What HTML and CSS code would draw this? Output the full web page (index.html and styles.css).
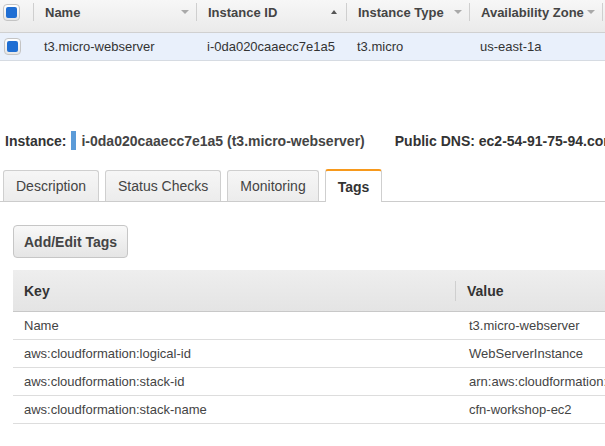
FILE: index.html
```
<!DOCTYPE html>
<html>
<head>
<meta charset="utf-8">
<link rel="stylesheet" href="styles.css">
</head>
<body>
<div class="page">
  <div class="grid grid-head">
    <div class="hcell hcell-check"><span class="check"><span class="check-fill"></span></span></div>
    <div class="hcell"><span>Name</span><span class="arrow-down"></span></div>
    <div class="hcell"><span>Instance ID</span><span class="arrow-up"></span></div>
    <div class="hcell"><span>Instance Type</span><span class="arrow-down"></span></div>
    <div class="hcell"><span>Availability Zone</span><span class="arrow-down"></span></div>
    <div class="hcell hcell-last"></div>
  </div>
  <div class="grid grid-row">
    <div class="dcell dcell-check"><span class="check"><span class="check-fill"></span></span></div>
    <div class="dcell">t3.micro-webserver</div>
    <div class="dcell">i-0da020caaecc7e1a5</div>
    <div class="dcell">t3.micro</div>
    <div class="dcell">us-east-1a</div>
    <div class="dcell"></div>
  </div>

  <div class="instance-line">
    <span class="inst-label">Instance:</span>
    <span class="inst-bar"></span>
    <span class="inst-id">i-0da020caaecc7e1a5 (t3.micro-webserver)</span>
    <span class="inst-dns">Public DNS: ec2-54-91-75-94.compute-1.amazonaws.com</span>
  </div>

  <div class="tabs">
    <div class="tab">Description</div>
    <div class="tab">Status Checks</div>
    <div class="tab">Monitoring</div>
    <div class="tab tab-active">Tags</div>
  </div>

  <div class="content">
    <button class="btn">Add/Edit Tags</button>
    <div class="tag-table">
      <div class="tag-head">
        <div class="tk">Key</div>
        <div class="tv tv-head">Value</div>
      </div>
      <div class="tag-row"><div class="tk">Name</div><div class="tv">t3.micro-webserver</div></div>
      <div class="tag-row"><div class="tk">aws:cloudformation:logical-id</div><div class="tv">WebServerInstance</div></div>
      <div class="tag-row"><div class="tk">aws:cloudformation:stack-id</div><div class="tv">arn:aws:cloudformation:us-east-1:123456789012:stack/cfn-workshop-ec2</div></div>
      <div class="tag-row"><div class="tk">aws:cloudformation:stack-name</div><div class="tv">cfn-workshop-ec2</div></div>
    </div>
  </div>
</div>
</body>
</html>
```

FILE: styles.css
```
html, body {
  margin: 0;
  padding: 0;
  background: #ffffff;
}
body {
  font-family: "Liberation Sans", Arial, sans-serif;
  color: #444;
  width: 605px;
  height: 446px;
  overflow: hidden;
}
.page {
  width: 605px;
  overflow: hidden;
}
.grid {
  display: grid;
  grid-template-columns: 33px 163px 150px 123px 133px 1fr;
}
.grid-head {
  height: 32px;
  background: linear-gradient(#f7f7f7, #eaeaea);
  border-bottom: 1px solid #d0d0d0;
}
.hcell {
  display: flex;
  align-items: center;
  justify-content: space-between;
  margin: 3px 0 11px 0;
  padding: 0 7px 0 11px;
  border-left: 1px solid #cfcfcf;
  font-size: 13px;
  font-weight: bold;
  color: #444;
  white-space: nowrap;
}
.hcell-check {
  border-left: none;
  padding: 0 0 0 3px;
  justify-content: flex-start;
}
.check {
  width: 17px;
  height: 17px;
  box-sizing: border-box;
  border: 1px solid #c4c4c4;
  border-radius: 4px;
  background: linear-gradient(#ffffff, #e6e6e6);
  display: flex;
  align-items: center;
  justify-content: center;
}
.check-fill {
  width: 11px;
  height: 11px;
  border-radius: 2px;
  background: #1f6ed3;
}
.arrow-down {
  width: 0;
  height: 0;
  border-left: 4px solid transparent;
  border-right: 4px solid transparent;
  border-top: 4px solid #a9a9a9;
}
.arrow-up {
  width: 0;
  height: 0;
  border-left: 3px solid transparent;
  border-right: 3px solid transparent;
  border-bottom: 4px solid #555;
  margin-right: 2px;
}
.grid-row {
  height: 27px;
  background: #e9f0fb;
  border-bottom: 1px solid #d6dbe2;
}
.dcell {
  display: flex;
  align-items: center;
  padding-left: 11px;
  font-size: 13px;
  color: #333;
  white-space: nowrap;
}
.dcell-check {
  padding-left: 4px;
}
.instance-line {
  display: flex;
  align-items: center;
  margin-top: 70px;
  height: 19px;
  padding-left: 5px;
  font-size: 14px;
  font-weight: bold;
  white-space: nowrap;
}
.inst-label {
  color: #333;
  flex: none;
}
.inst-bar {
  flex: none;
  width: 5px;
  height: 19px;
  background: #5b9bd8;
  margin: 0 5px 0 5px;
}
.inst-id {
  flex: none;
  color: #444;
  margin-right: 30px;
}
.inst-dns {
  flex: none;
  color: #333;
}
.tabs {
  display: flex;
  align-items: flex-end;
  gap: 6px;
  margin-top: 19px;
  padding-left: 3px;
  height: 32px;
  border-bottom: 1px solid #cccccc;
}
.tab {
  height: 31px;
  box-sizing: border-box;
  padding: 0 12px;
  display: flex;
  align-items: center;
  font-size: 14px;
  color: #444;
  background: linear-gradient(#f6f6f6, #ececec);
  border: 1px solid #cfcfcf;
  border-bottom: none;
  border-radius: 3px 3px 0 0;
  white-space: nowrap;
}
.tab-active {
  height: 33px;
  margin-bottom: -1px;
  background: #ffffff;
  border-top: 2px solid #f7991c;
  font-weight: bold;
  color: #333;
}
.content {
  padding: 23px 0 0 13px;
}
.btn {
  display: block;
  height: 33px;
  padding: 0 10px;
  font-family: "Liberation Sans", Arial, sans-serif;
  font-size: 14px;
  font-weight: bold;
  color: #444;
  background: linear-gradient(#f8f8f8, #e5e5e5);
  border: 1px solid #c6c6c6;
  border-radius: 4px;
}
.tag-table {
  margin-top: 12px;
  width: 640px;
}
.tag-head {
  display: flex;
  height: 41px;
  align-items: center;
  background: linear-gradient(#eeeeee, #e4e4e4);
  border-bottom: 1px solid #c8c8c8;
  font-size: 14px;
  font-weight: bold;
  color: #333;
}
.tag-row {
  display: flex;
  height: 27px;
  align-items: center;
  border-bottom: 1px solid #dddddd;
  font-size: 13px;
  color: #444;
}
.tk {
  flex: none;
  width: 442px;
  box-sizing: border-box;
  padding-left: 11px;
  white-space: nowrap;
}
.tv {
  flex: none;
  padding-left: 14px;
  white-space: nowrap;
}
.tv-head {
  border-left: 1px solid #cfcfcf;
  height: 20px;
  line-height: 20px;
  padding-left: 11px;
}
```
